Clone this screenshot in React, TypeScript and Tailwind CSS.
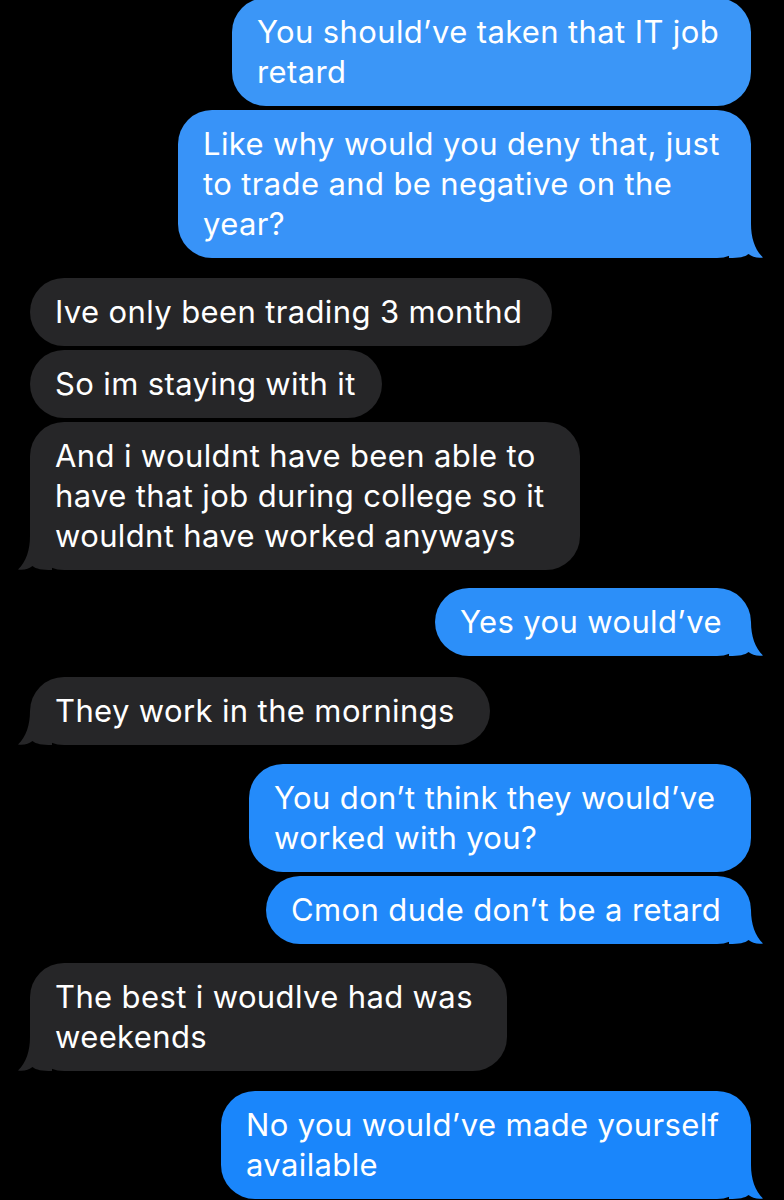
import { FC } from "react";

type Msg = {
    me: boolean;
    lines: string[];
    w: string;
    mt: string;
    tail: boolean;
    bg: string;
};

const messages: Msg[] = [
    { me: true, lines: ["You should’ve taken that IT job", "retard"], w: "w-[519px]", mt: "mt-[-2px]", tail: false, bg: "bg-[#3b96f7]" },
    { me: true, lines: ["Like why would you deny that, just", "to trade and be negative on the", "year?"], w: "w-[573px]", mt: "mt-[4px]", tail: true, bg: "bg-[#3893f8]" },
    { me: false, lines: ["Ive only been trading 3 monthd"], w: "w-[522px]", mt: "mt-[20px]", tail: false, bg: "bg-[#262628]" },
    { me: false, lines: ["So im staying with it"], w: "w-[352px]", mt: "mt-[4px]", tail: false, bg: "bg-[#262628]" },
    { me: false, lines: ["And i wouldnt have been able to", "have that job during college so it", "wouldnt have worked anyways"], w: "w-[550px]", mt: "mt-[4px]", tail: true, bg: "bg-[#262628]" },
    { me: true, lines: ["Yes you would’ve"], w: "w-[316px]", mt: "mt-[18px]", tail: true, bg: "bg-[#2c8ff9]" },
    { me: false, lines: ["They work in the mornings"], w: "w-[460px]", mt: "mt-[21px]", tail: true, bg: "bg-[#262628]" },
    { me: true, lines: ["You don’t think they would’ve", "worked with you?"], w: "w-[502px]", mt: "mt-[19px]", tail: false, bg: "bg-[#248bfa]" },
    { me: true, lines: ["Cmon dude don’t be a retard"], w: "w-[485px]", mt: "mt-[4px]", tail: true, bg: "bg-[#2189fa]" },
    { me: false, lines: ["The best i woudlve had was", "weekends"], w: "w-[477px]", mt: "mt-[19px]", tail: true, bg: "bg-[#262628]" },
    { me: true, lines: ["No you would’ve made yourself", "available"], w: "w-[530px]", mt: "mt-[20px]", tail: true, bg: "bg-[#1a86fb]" },
];

const Tail: FC<{ me: boolean; color: string }> = ({ me, color }) => (
    <svg
        width="34"
        height="34"
        viewBox="0 0 34 34"
        className={me ? "absolute bottom-0 right-[-12px]" : "absolute bottom-0 left-[-12px] -scale-x-100"}
    >
        <path d="M0 0 H22 C22 14 26 26 34 33.5 C28 34.5 23 32.5 19.5 30 C16 33 10 34 0 34 Z" fill={color} />
    </svg>
);

const tailColor = (bg: string) => bg.slice(4, -1);

const App: FC = () => {
    return (
        <div className="w-[784px] h-[1200px] overflow-hidden bg-black flex flex-col" style={{ fontFamily: "Inter, 'Noto Sans', sans-serif" }}>
            {messages.map((m, i) => (
                <div key={i} className={`flex shrink-0 ${m.me ? "justify-end pr-[33px]" : "justify-start pl-[30px]"} ${m.mt}`}>
                    <div className={`relative ${m.w} ${m.bg} rounded-[34px] py-[14px] pl-[25px] text-white text-[31px] leading-[40px] tracking-[0.012em]`}>
                        {m.lines.map((l, j) => (
                            <div key={j} className="relative whitespace-nowrap">{l}</div>
                        ))}
                        {m.tail && <Tail me={m.me} color={tailColor(m.bg)} />}
                    </div>
                </div>
            ))}
        </div>
    );
};

export default App;
